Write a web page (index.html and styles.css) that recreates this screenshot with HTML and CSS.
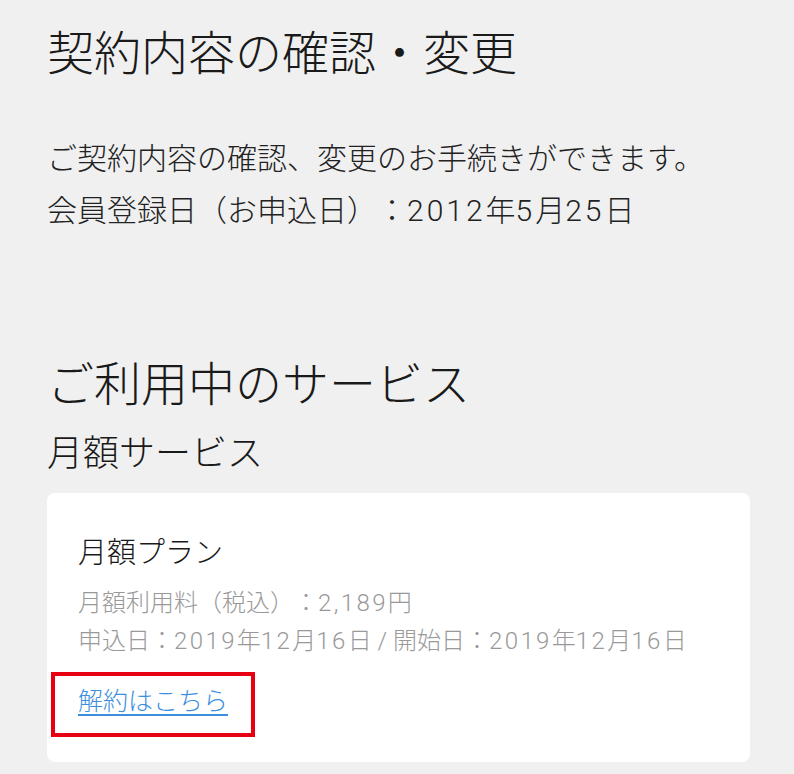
FILE: index.html
```html
<!DOCTYPE html>
<html lang="ja">
<head>
  <meta charset="utf-8" />
  <meta name="viewport" content="width=device-width, initial-scale=1" />
  <title>契約内容の確認・変更</title>
  <link rel="stylesheet" href="styles.css">
</head>
<body>
  <main class="page">
    <h1 class="page-title">契約内容の確認・変更</h1>

    <div class="intro">
      <p>ご契約内容の確認、変更のお手続きができます。</p>
      <p>会員登録日（お申込日）：<span class="num">2012</span>年<span class="num">5</span>月<span class="num">25</span>日</p>
    </div>

    <h2 class="section-title">ご利用中のサービス</h2>
    <h3 class="sub-title">月額サービス</h3>

    <div class="card">
      <div class="plan-name">月額プラン</div>
      <div class="plan-info">月額利用料（税込）：<span class="num">2,189</span>円</div>
      <div class="plan-info">申込日：<span class="num">2019</span>年<span class="num">12</span>月<span class="num">16</span>日 / 開始日：<span class="num">2019</span>年<span class="num">12</span>月<span class="num">16</span>日</div>
      <div class="cancel-box">
        <a href="#" class="cancel-link">解約はこちら</a>
      </div>
    </div>
  </main>
</body>
</html>
```

FILE: styles.css
```css
body {
  margin: 0;
  padding: 0;
  background-color: #f0f0f0;
  color: #1a1a1a;
  font-family: Roboto, "Noto Sans CJK JP", sans-serif;
  font-weight: 300;
  text-spacing-trim: space-all;
}

.page {
  padding: 14px 44px 20px 47px;
}

.page-title {
  margin: 0;
  font-size: 47px;
  font-weight: 300;
  line-height: 80px;
}

.intro {
  margin-top: 39px;
}

.intro p {
  margin: 0;
  font-size: 30px;
  line-height: 52px;
  color: #222;
}

.num {
  letter-spacing: 0.1em;
}

.section-title {
  margin: 116px 0 0;
  font-size: 47px;
  font-weight: 300;
  line-height: 64px;
}

.sub-title {
  margin: 12px 0 0;
  font-size: 36px;
  font-weight: 300;
  line-height: 50px;
}

.card {
  margin-top: 14px;
  background: #fff;
  border-radius: 8px;
  padding: 38px 30px 25px 31px;
}

.plan-name {
  font-size: 29px;
  line-height: 44px;
  margin-bottom: 9px;
  color: #1a1a1a;
}

.plan-info {
  font-size: 24px;
  line-height: 38px;
  color: #999;
}

.cancel-box {
  display: inline-block;
  margin: 12px 0 0 -27px;
  padding: 8px 23px 13px 23px;
  border: 4px solid #e60012;
}

.cancel-link {
  font-size: 25px;
  line-height: 36px;
  color: #3b8fdd;
  text-decoration: underline;
  text-underline-offset: 4px;
}
```
